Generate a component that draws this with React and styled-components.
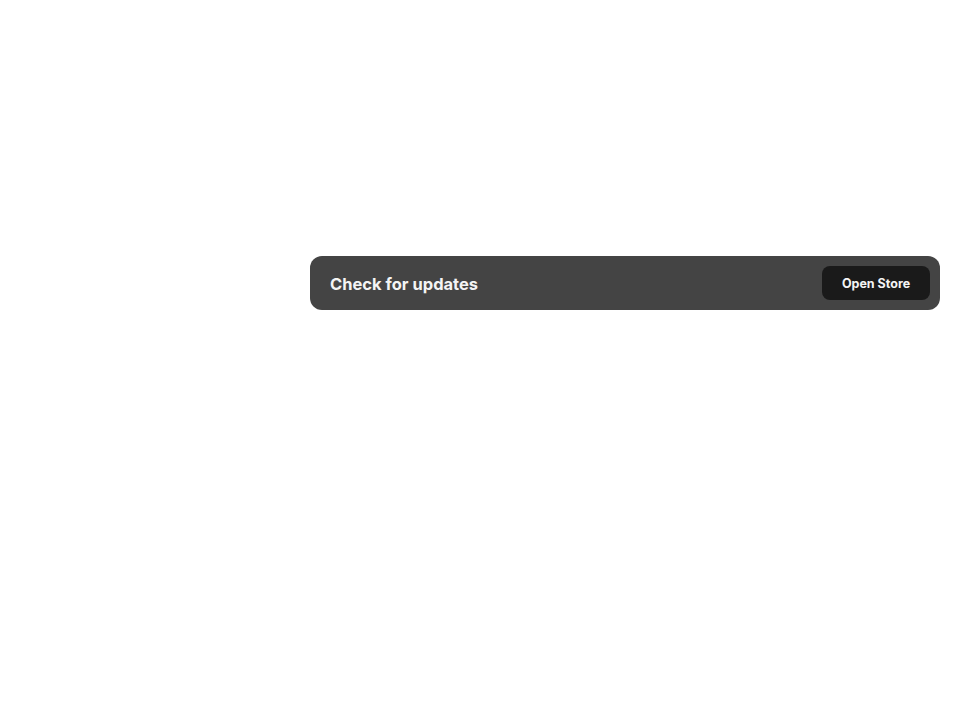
import React from 'react'
import styled, { createGlobalStyle } from 'styled-components'

const GlobalStyle = createGlobalStyle`
  html, body {
    margin: 0;
    padding: 0;
    background: #ffffff;
    font-family: Inter, "Noto Sans", sans-serif;
  }
`

const Page = styled.div`
  min-height: 720px;
  display: grid;
  grid-template-columns: 310px 1fr;
  padding: 256px 20px 0 0;
  box-sizing: border-box;
`

const Banner = styled.div`
  grid-column: 2;
  height: 54px;
  display: flex;
  align-items: center;
  justify-content: space-between;
  padding: 1px 10px 0 20px;
  background: #444444;
  border-radius: 12px;
  box-sizing: border-box;
`

const Title = styled.span`
  color: #f4f4f4;
  font-size: 16.5px;
  font-weight: 700;
`

const Button = styled.button`
  height: 34px;
  width: 108px;
  margin-top: -1px;
  border: none;
  border-radius: 8px;
  background: #1a1a1a;
  color: #f4f4f4;
  font-family: inherit;
  font-size: 12.5px;
  font-weight: 700;
  cursor: pointer;
`

const App = () => {
  return (
    <>
      <GlobalStyle />
      <Page>
        <Banner>
          <Title>Check for updates</Title>
          <Button>Open Store</Button>
        </Banner>
      </Page>
    </>
  )
}

export default App
